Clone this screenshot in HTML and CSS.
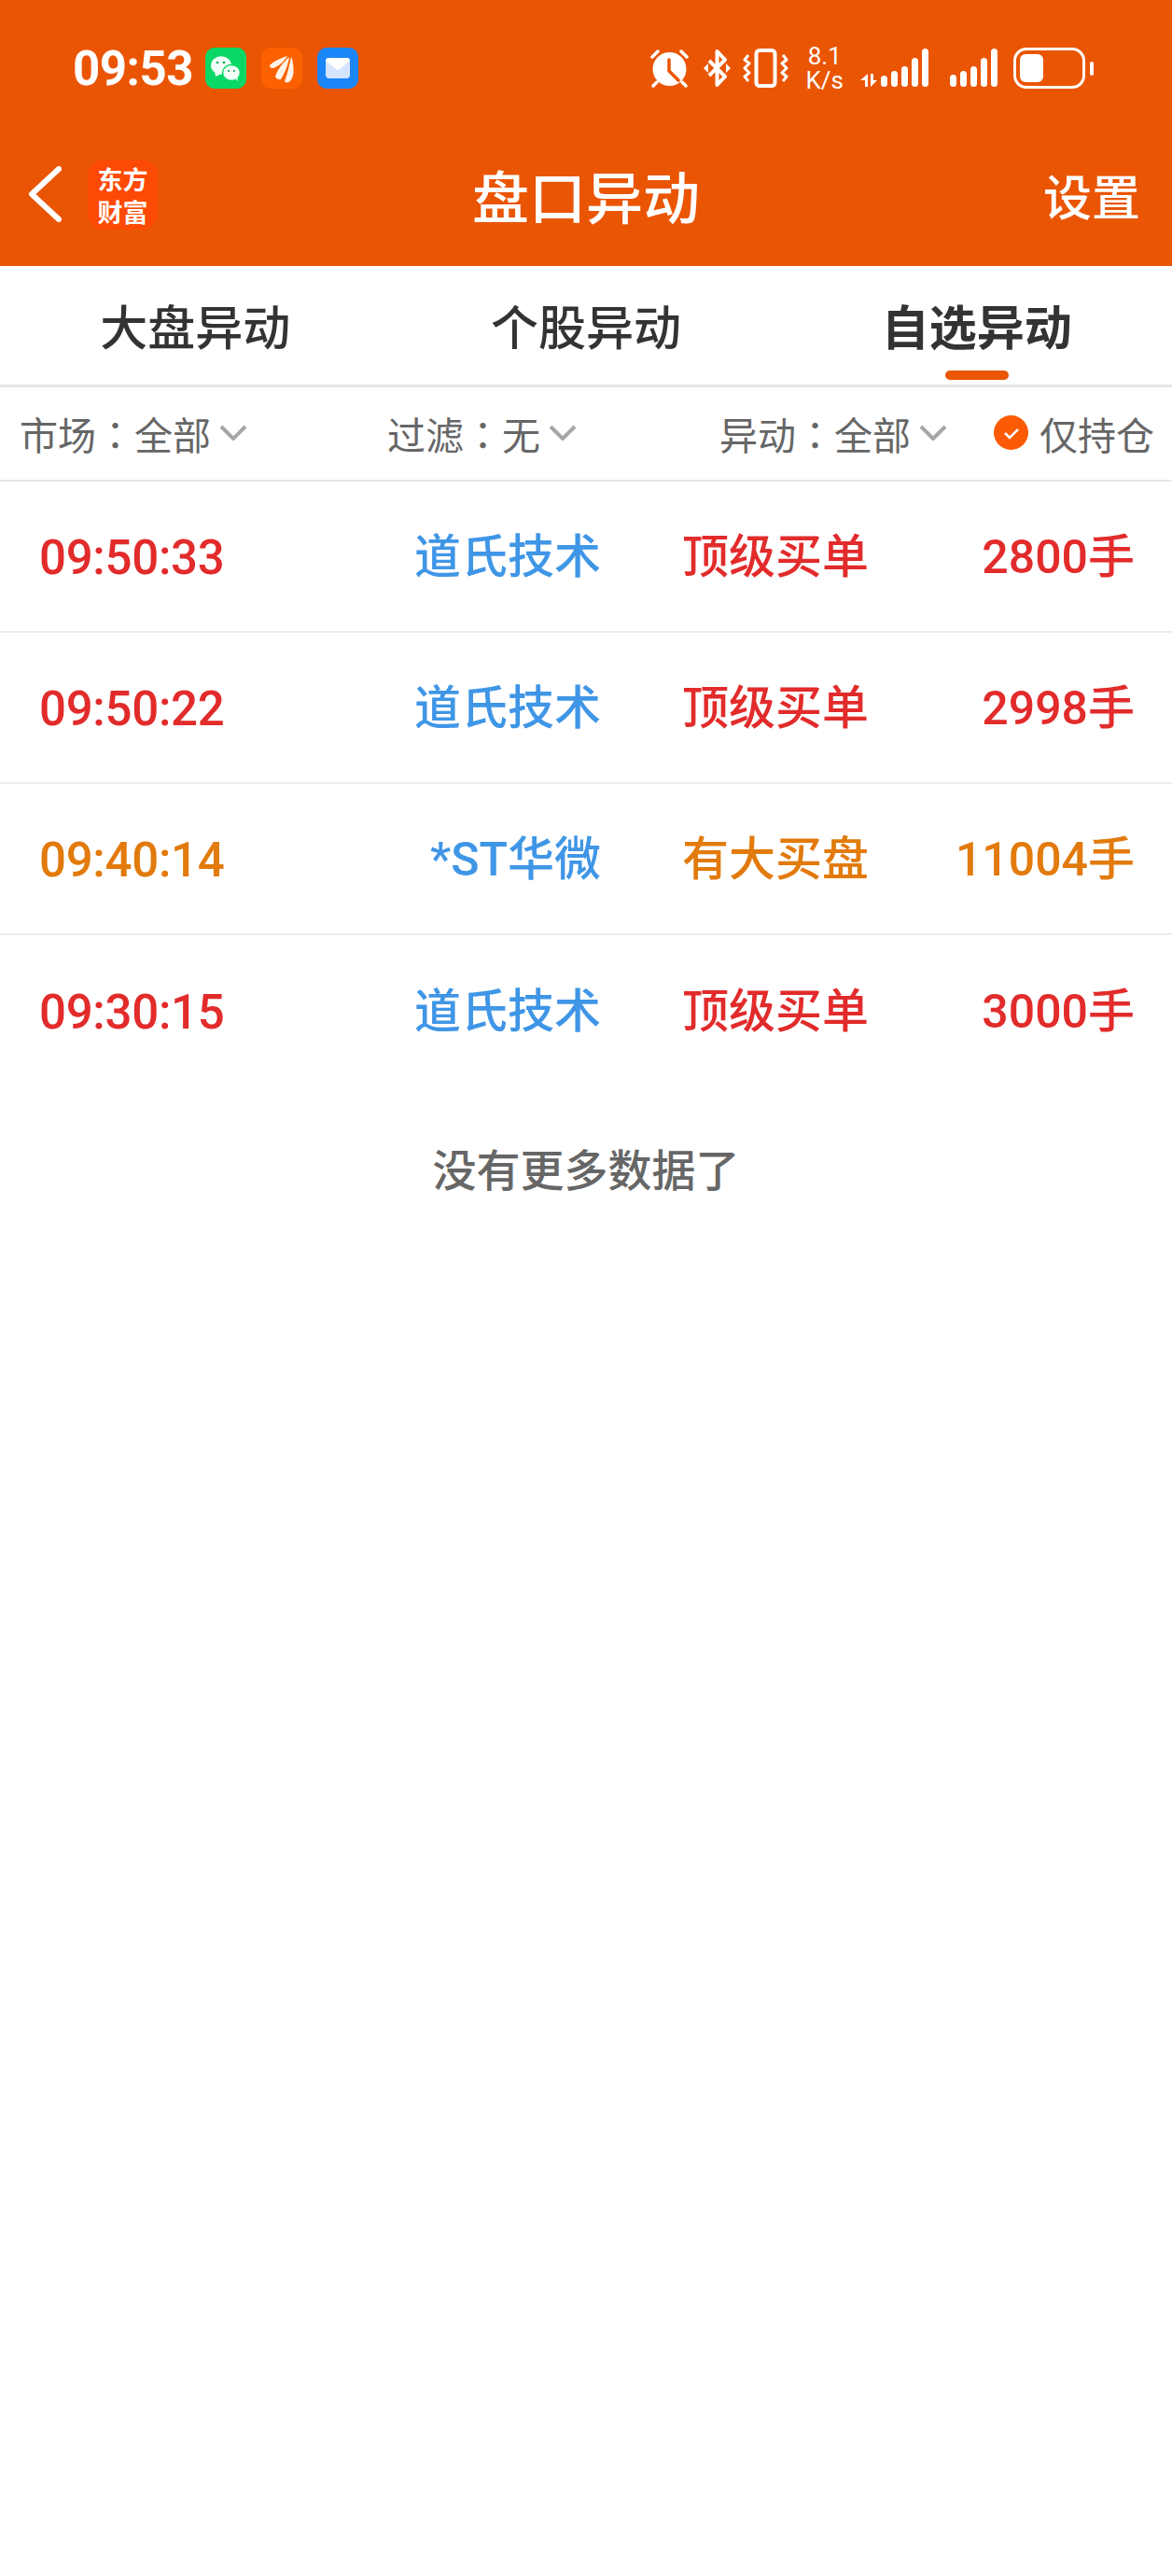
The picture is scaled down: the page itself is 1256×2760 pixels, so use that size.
FILE: index.html
```html
<!DOCTYPE html>
<html lang="zh-CN">
<head>
  <meta charset="UTF-8">
  <title>盘口异动</title>
  <link rel="stylesheet" href="styles.css">
</head>
<body>
  <div class="top">
    <div class="status-bar">
      <div class="status-left">
        <span class="clock">09:53</span>
        <span class="app-icon wechat">
          <svg viewBox="0 0 44 44" width="44" height="44">
            <ellipse cx="17" cy="19" rx="11" ry="9.700" fill="#f2fff7"/>
            <path d="M10 25l1 6 6-3z" fill="#f2fff7"/>
            <ellipse cx="28" cy="27" rx="9.500" ry="8.500" fill="#f2fff7" stroke="#09d866" stroke-width="1.500"/>
            <path d="M32 33l3 3-1-6z" fill="#f2fff7"/>
            <circle cx="13" cy="16" r="1.300" fill="#09a858"/>
            <circle cx="20" cy="16" r="1.300" fill="#09a858"/>
            <circle cx="25" cy="25" r="1.100" fill="#09a858"/>
            <circle cx="31" cy="25" r="1.100" fill="#09a858"/>
          </svg>
        </span>
        <span class="app-icon feather">
          <svg viewBox="0 0 44 44" width="44" height="44" fill="#fff3e8">
            <path d="M9 19c5-5 12-8 19-10-3 5-9 11-15 13-2 .5-4-1-4-3z"/>
            <path d="M15 31c2-7 9-16 15-21-1 7-4 16-9 24-2 1-5-1-6-3z"/>
            <path d="M25 36c3-7 5-17 7-26 1 1 3 8 2.500 17-.5 4-2 8-5 10-2 1-4 0-4.500-1z"/>
          </svg>
        </span>
        <span class="app-icon mail">
          <svg viewBox="0 0 44 44" width="44" height="44">
            <rect x="9" y="11" width="26" height="22" rx="4" fill="#d6e5ff"/>
            <path d="M9 14q0-3 4-3h18q4 0 4 3L24 23q-2 2-4 0z" fill="#fff"/>
          </svg>
        </span>
      </div>
      <div class="status-right">
        <svg class="sys-alarm" viewBox="0 0 43 42" width="43" height="42">
          <path d="M3 9l6-6M40 9l-6-6M8 36l-4 4M35 36l4 4" stroke="#fff" stroke-width="3.500" stroke-linecap="round"/>
          <circle cx="21.500" cy="22" r="18" fill="#fff"/>
          <path d="M21 12v12l10 10" fill="none" stroke="#ea5504" stroke-width="3.500" stroke-linecap="round"/>
        </svg>
        <svg class="sys-bt" viewBox="0 0 29 42" width="29" height="42">
          <path d="M6 13l17 17-8.500 9V3l8.500 9L6 29" fill="none" stroke="#fff" stroke-width="4" stroke-linejoin="round"/>
          <path d="M0 21l5-5v10zM29 21l-5-5v10z" fill="#fff"/>
        </svg>
        <svg class="sys-vibrate" viewBox="0 0 49 42" width="49" height="42" fill="none" stroke="#fff">
          <rect x="14.500" y="2" width="20" height="38" rx="3.500" stroke-width="4"/>
          <path d="M6 7L2 12l5 4-5 5 5 5-5 4 4 5M43 7l4 5-5 4 5 5-5 5 5 4-4 5" stroke-width="3" stroke-linejoin="round"/>
        </svg>
        <span class="net-speed"><b>8.1</b><b>K/s</b></span>
        <svg class="sys-signal-a" viewBox="0 0 73 44" width="73" height="44" fill="#fff">
          <path d="M8 28v14H5v-7H0zM11 28h3v7h4l-7 7z"/>
          <rect x="22" y="30" width="7" height="12" rx="3.500"/>
          <rect x="33" y="25" width="7" height="17" rx="3.500"/>
          <rect x="44" y="20" width="7" height="22" rx="3.500"/>
          <rect x="55" y="11" width="7" height="31" rx="3.500"/>
          <rect x="66" y="1" width="7" height="41" rx="3.500"/>
        </svg>
        <svg class="sys-signal-b" viewBox="0 0 51 44" width="51" height="44" fill="#fff">
          <rect x="0" y="29" width="7" height="13" rx="3.500"/>
          <rect x="11" y="25" width="7" height="17" rx="3.500"/>
          <rect x="22" y="20" width="7" height="22" rx="3.500"/>
          <rect x="33" y="11" width="7" height="31" rx="3.500"/>
          <rect x="44" y="1" width="7" height="41" rx="3.500"/>
        </svg>
        <span class="battery"><i class="battery-fill"></i></span>
        <i class="battery-cap"></i>
      </div>
    </div>
    <header class="nav-bar">
      <div class="nav-left">
        <svg class="back" viewBox="0 0 36 60" width="36" height="60" fill="none" stroke="#fff" stroke-width="6" stroke-linecap="round" stroke-linejoin="round">
          <path d="M33 3L4 30l29 27"/>
        </svg>
        <span class="brand">东方<br>财富</span>
      </div>
      <h1>盘口异动</h1>
      <span class="nav-action">设置</span>
    </header>
  </div>

  <nav class="tabs">
    <div class="tab">大盘异动</div>
    <div class="tab">个股异动</div>
    <div class="tab active">自选异动</div>
  </nav>

  <div class="filters">
    <div class="filter filter-market">市场<span class="colon">：</span>全部<svg class="chevron" viewBox="0 0 30 17" width="30" height="17"><path d="M2 2l13 13L28 2"/></svg></div>
    <div class="filter filter-rule">过滤<span class="colon">：</span>无<svg class="chevron" viewBox="0 0 30 17" width="30" height="17"><path d="M2 2l13 13L28 2"/></svg></div>
    <div class="filter filter-move">异动<span class="colon">：</span>全部<svg class="chevron" viewBox="0 0 30 17" width="30" height="17"><path d="M2 2l13 13L28 2"/></svg></div>
    <div class="filter filter-hold">
      <svg viewBox="0 0 37 37" width="37" height="37"><circle cx="18.500" cy="18.500" r="18.500" fill="#fc5a05"/><path d="M12 19l5 5 9-9" fill="none" stroke="#fff" stroke-width="2.500"/></svg>
      仅持仓
    </div>
  </div>

  <ul class="rows">
    <li class="row red"><span class="time">09:50:33</span><span class="stock">道氏技术</span><span class="kind">顶级买单</span><span class="vol">2800手</span></li>
    <li class="row red"><span class="time">09:50:22</span><span class="stock">道氏技术</span><span class="kind">顶级买单</span><span class="vol">2998手</span></li>
    <li class="row amber"><span class="time">09:40:14</span><span class="stock">*ST华微</span><span class="kind">有大买盘</span><span class="vol">11004手</span></li>
    <li class="row red"><span class="time">09:30:15</span><span class="stock">道氏技术</span><span class="kind">顶级买单</span><span class="vol">3000手</span></li>
  </ul>
  <p class="no-more">没有更多数据了</p>
</body>
</html>
```
FILE: styles.css
```css
:root {
  --brand: #ea5504;
  --text-dark: #333333;
  --text-grey: #666666;
  --line: #e6e6e6;
  --red: #e22b2b;
  --amber: #e27a0c;
  --blue: #4096e6;
}

* {
  box-sizing: border-box;
}

body {
  margin: 0;
  background: #ffffff;
  font-family: "Roboto", "Noto Sans CJK SC", sans-serif;
  color: var(--text-dark);
}

.top {
  height: 285px;
  background: var(--brand);
  color: #ffffff;
}

/* status bar */
.status-bar {
  display: flex;
  justify-content: space-between;
  align-items: center;
  height: 146px;
  padding: 0 84px 0 78px;
}

.status-left {
  display: flex;
  align-items: center;
  gap: 16px;
}

.clock {
  width: 126px;
  font-size: 51px;
  font-weight: 700;
  letter-spacing: -0.5px;
}

.app-icon {
  display: flex;
  width: 44px;
  height: 44px;
  border-radius: 10px;
}

.wechat { background: #09d866; }
.feather { background: #fc6100; }
.mail { background: #1a86f8; }

.status-right {
  display: flex;
  align-items: center;
}

.sys-bt { margin-left: 15px; }
.sys-vibrate { margin-left: 13px; }
.net-speed { margin-left: 19px; }
.sys-signal-a { margin-left: 18px; }
.sys-signal-b { margin-left: 23px; }
.battery { margin-left: 17px; }
.battery-cap { margin-left: 5px; }

.net-speed {
  display: flex;
  flex-direction: column;
  align-items: center;
  font-size: 26px;
  line-height: 26px;
}

.net-speed b {
  font-weight: 400;
}

.battery {
  display: flex;
  width: 77px;
  height: 44px;
  padding: 4px;
  border: 3px solid #ffffff;
  border-radius: 14px;
}

.battery-fill {
  width: 25px;
  background: #ffffff;
  border-radius: 6px;
}

.battery-cap {
  width: 4px;
  height: 15px;
  background: #ffffff;
  border-radius: 2px;
}

/* title row */
.nav-bar {
  display: grid;
  grid-template-columns: 1fr auto 1fr;
  align-items: center;
  height: 139px;
  padding: 0 30px 15px;
}

.nav-left {
  display: flex;
  align-items: center;
  gap: 28px;
}

.brand {
  width: 75px;
  height: 75px;
  flex: none;
  padding-top: 3px;
  border-radius: 18px;
  background: #fc4a06;
  font-family: "Noto Sans CJK SC", sans-serif;
  font-size: 27px;
  font-weight: 700;
  line-height: 35px;
  text-align: center;
}

.nav-bar h1 {
  margin: 0;
  font-size: 61px;
  font-weight: 500;
  white-space: nowrap;
}

.nav-action {
  justify-self: end;
  margin-right: 4px;
  font-size: 52px;
  font-weight: 500;
}

/* tabs */
.tabs {
  display: grid;
  grid-template-columns: repeat(3, 1fr);
  height: 130px;
  border-bottom: 3px solid var(--line);
}

.tab {
  display: flex;
  justify-content: center;
  align-items: center;
  position: relative;
  padding-bottom: 2px;
  font-size: 51px;
  font-weight: 500;
}

.tab.active {
  font-weight: 700;
}

.tab.active::after {
  content: "";
  position: absolute;
  left: 50%;
  bottom: 5px;
  width: 68px;
  height: 10px;
  margin-left: -34px;
  border-radius: 5px;
  background: var(--brand);
}

/* filter row */
.filters {
  display: flex;
  align-items: center;
  height: 101px;
  padding: 0 0 2px 21px;
  border-bottom: 2px solid var(--line);
  font-size: 41px;
  color: var(--text-grey);
}

.filter {
  display: flex;
  align-items: center;
  white-space: nowrap;
}

.filter-market { width: 394px; }
.filter-rule { width: 356px; }
.filter-move { width: 294px; }

.filter-hold {
  gap: 12px;
}

/* traditional-style glyph keeps the colon in the middle of its cell */
.colon {
  font-family: "Noto Sans CJK TC", sans-serif;
}

.chevron {
  margin-left: 9px;
  fill: none;
  stroke: #a6a6a6;
  stroke-width: 4;
}

/* data rows */
.rows {
  margin: 0;
  padding: 0;
  list-style: none;
}

.row {
  display: grid;
  grid-template-columns: 401px 201px 287px 285px;
  align-items: center;
  height: 162px;
  padding: 2px 40px 0 42px;
  border-bottom: 2px solid #ececec;
  font-size: 50px;
  font-weight: 500;
  line-height: 1;
}

.row:last-child {
  border-bottom: 0;
}

.row.red { color: var(--red); }
.row.amber { color: var(--amber); }

.time {
  font-size: 51px;
  letter-spacing: -0.3px;
}

.stock {
  color: var(--blue);
  text-align: right;
  white-space: nowrap;
}

.kind {
  padding-left: 87px;
  white-space: nowrap;
}

.vol {
  text-align: right;
  white-space: nowrap;
}

.no-more {
  margin: 52px 0 0;
  font-size: 47px;
  font-weight: 500;
  color: var(--text-grey);
  text-align: center;
}
```
